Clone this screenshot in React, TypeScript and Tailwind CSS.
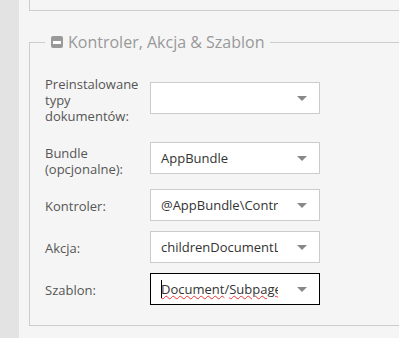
import React from 'react'

type Row = {
  label: string
  value: string
  rowClass: string
  labelClass: string
  selectClass: string
  focused?: boolean
}

const rows: Row[] = [
  { label: 'Preinstalowane typy dokumentów:', value: '', rowClass: 'mt-[22px]', labelClass: '', selectClass: 'mt-[6px]' },
  { label: 'Bundle (opcjonalne):', value: 'AppBundle', rowClass: 'mt-[18px]', labelClass: 'mt-[3px]', selectClass: '' },
  { label: 'Kontroler:', value: '@AppBundle\\Controller\\DocumentController', rowClass: 'mt-[12px]', labelClass: 'mt-[9px]', selectClass: '' },
  { label: 'Akcja:', value: 'childrenDocumentListAction', rowClass: 'mt-[10px]', labelClass: 'mt-[9px]', selectClass: '' },
  { label: 'Szablon:', value: 'Document/Subpages.html.twig', rowClass: 'mt-[10px]', labelClass: 'mt-[9px]', selectClass: '', focused: true },
]

function Arrow() {
  return (
    <svg width="10" height="5" viewBox="0 0 10 5" className="shrink-0">
      <path d="M0 0 L10 0 L5 5 Z" fill="#888" />
    </svg>
  )
}

function ComboField({ row }: { row: Row }) {
  return (
    <div
      className={`w-[170px] h-[32px] bg-white flex items-center pl-[10px] pr-[12px] ${
        row.focused ? 'border border-black' : 'border border-[#cccccc]'
      } ${row.selectClass}`}
    >
      <div className="w-[117px] h-[22px] pt-[1px] overflow-hidden whitespace-nowrap text-[13px] leading-[20px] text-[#333] relative">
        {row.focused ? (
          <>
            <span className="absolute left-0 top-[2px] w-px h-[18px] bg-black" />
            <span className="underline decoration-wavy decoration-[#e33] decoration-1 underline-offset-[1px]">Document</span>
            /
            <span className="underline decoration-wavy decoration-[#e33] decoration-1 underline-offset-[1px]">Subpages</span>
            .html.twig
          </>
        ) : (
          row.value
        )}
      </div>
      <div className="flex-1" />
      <Arrow />
    </div>
  )
}

export default function App() {
  return (
    <div
      className="w-[399px] h-[338px] overflow-hidden flex bg-[#f5f5f5]"
      style={{ fontFamily: '"Open Sans", "Noto Sans", sans-serif' }}
    >
      <div className="w-[19px] shrink-0 bg-[#e3e3e3]" />
      <div className="flex-1 pl-[10px] min-w-0">
        <div className="w-[420px] h-[11px] border-l border-b border-[#cccccc]" />
        <fieldset className="w-[420px] mt-[19px] border border-[#cccccc] pl-[15px] pb-[20px]">
          <legend className="px-[6px] flex items-center gap-[5px] text-[16px] leading-[24px] text-[#999]">
            <span className="w-[12px] h-[12px] rounded-[2px] bg-[#999] flex items-center justify-center">
              <span className="w-[8px] h-[3px] bg-white" />
            </span>
            Kontroler, Akcja &amp; Szablon
          </legend>
          {rows.map((row) => (
            <div key={row.label} className={`flex items-start ${row.rowClass}`}>
              <div className={`w-[105px] shrink-0 pr-[5px] text-[13px] leading-[16px] text-[#555] ${row.labelClass}`}>
                {row.label}
              </div>
              <ComboField row={row} />
            </div>
          ))}
        </fieldset>
      </div>
    </div>
  )
}
